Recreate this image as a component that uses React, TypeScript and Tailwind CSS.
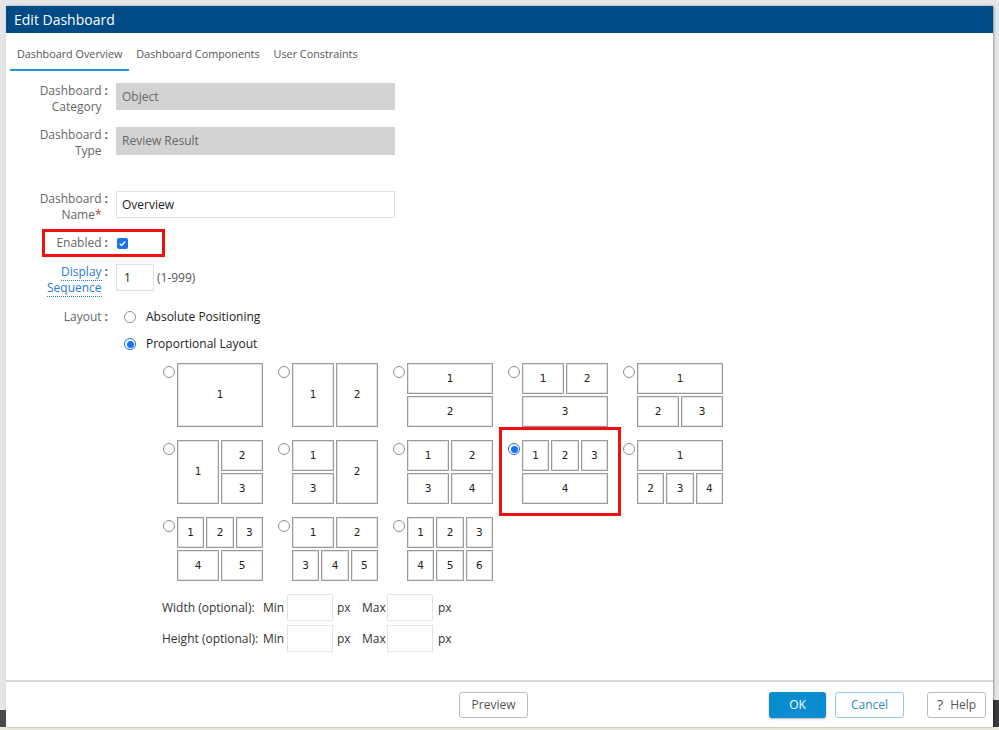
import React from 'react';

const Cell: React.FC<{ children: React.ReactNode }> = ({ children }) => (
  <div className="flex flex-1 items-center justify-center border border-[#9a9a9a] bg-white shadow-[inset_0_0_0_1px_#e4e4e4] font-['DejaVu_Sans',sans-serif] text-[10.5px] text-[#222]">
    {children}
  </div>
);

const Row: React.FC<{ children: React.ReactNode }> = ({ children }) => (
  <div className="flex flex-1 gap-[2px]">{children}</div>
);

const Col: React.FC<{ children: React.ReactNode }> = ({ children }) => (
  <div className="flex flex-1 flex-col gap-[2px]">{children}</div>
);

const Box: React.FC<{ children: React.ReactNode; row?: boolean }> = ({ children, row }) => (
  <div className={row ? 'flex h-[64px] w-[86px] gap-[2px]' : 'flex h-[64px] w-[86px] flex-col gap-[2px]'}>
    {children}
  </div>
);

const Radio: React.FC<{ checked?: boolean }> = ({ checked }) =>
  checked ? (
    <span className="flex h-[12px] w-[12px] items-center justify-center rounded-full border border-[#1a73e8] bg-white">
      <span className="h-[7px] w-[7px] rounded-full bg-[#1a73e8]" />
    </span>
  ) : (
    <span className="block h-[12px] w-[12px] rounded-full border border-[#8f8f8f] bg-white" />
  );

const layouts: { id: string; box: React.ReactNode }[] = [
  { id: 'a', box: <Box><Cell>1</Cell></Box> },
  { id: 'b', box: <Box row><Cell>1</Cell><Cell>2</Cell></Box> },
  { id: 'c', box: <Box><Cell>1</Cell><Cell>2</Cell></Box> },
  { id: 'd', box: <Box><Row><Cell>1</Cell><Cell>2</Cell></Row><Row><Cell>3</Cell></Row></Box> },
  { id: 'e', box: <Box><Row><Cell>1</Cell></Row><Row><Cell>2</Cell><Cell>3</Cell></Row></Box> },
  { id: 'f', box: <Box row><Col><Cell>1</Cell></Col><Col><Cell>2</Cell><Cell>3</Cell></Col></Box> },
  { id: 'g', box: <Box row><Col><Cell>1</Cell><Cell>3</Cell></Col><Col><Cell>2</Cell></Col></Box> },
  { id: 'h', box: <Box><Row><Cell>1</Cell><Cell>2</Cell></Row><Row><Cell>3</Cell><Cell>4</Cell></Row></Box> },
  { id: 'i', box: <Box><Row><Cell>1</Cell><Cell>2</Cell><Cell>3</Cell></Row><Row><Cell>4</Cell></Row></Box> },
  { id: 'j', box: <Box><Row><Cell>1</Cell></Row><Row><Cell>2</Cell><Cell>3</Cell><Cell>4</Cell></Row></Box> },
  { id: 'k', box: <Box><Row><Cell>1</Cell><Cell>2</Cell><Cell>3</Cell></Row><Row><Cell>4</Cell><Cell>5</Cell></Row></Box> },
  { id: 'l', box: <Box><Row><Cell>1</Cell><Cell>2</Cell></Row><Row><Cell>3</Cell><Cell>4</Cell><Cell>5</Cell></Row></Box> },
  { id: 'm', box: <Box><Row><Cell>1</Cell><Cell>2</Cell><Cell>3</Cell></Row><Row><Cell>4</Cell><Cell>5</Cell><Cell>6</Cell></Row></Box> },
];

const Label: React.FC<{ lines: React.ReactNode[]; link?: boolean }> = ({ lines, link }) => (
  <div className="flex w-[102px] shrink-0 justify-end">
    <div className={link ? 'text-right leading-[16px] text-[#2f7bd0]' : 'text-right leading-[16px] text-[#666]'}>
      {lines.map((l, i) => (
        <div key={i}>
          {link ? <span className="border-b border-dotted border-[#2f7bd0]">{l}</span> : l}
        </div>
      ))}
    </div>
    <span className="ml-[3px] font-bold leading-[16px] text-[#666]">:</span>
  </div>
);

const SizeRow: React.FC<{ label: string; className: string }> = ({ label, className }) => (
  <div className={`ml-[156px] flex items-center text-[#333] ${className}`}>
    <span className="w-[101px]">{label}</span>
    <span className="w-[24px]">Min</span>
    <div className="h-[27px] w-[46px] border border-[#e4e4e4]" />
    <span className="ml-[4px] w-[25px]">px</span>
    <span className="w-[25px]">Max</span>
    <div className="h-[27px] w-[46px] border border-[#e4e4e4]" />
    <span className="ml-[5px]">px</span>
  </div>
);

export default function App() {
  return (
    <div className="relative h-[730px] w-[999px] overflow-hidden bg-[#e3e5e7] pl-[6px] pt-[6px] font-['Open_Sans',sans-serif] text-[12px]">
      <div className="absolute bottom-0 left-0 h-[20px] w-[6px] bg-[#4a4a4a]" />
      <div className="absolute bottom-0 right-0 h-[30px] w-[6px] bg-[#3a3a3a]" />
      <div className="absolute bottom-0 left-0 h-[3px] w-full bg-[#ece9dc]" />

      <div className="relative flex h-[721px] w-[987px] flex-col bg-white shadow-[1px_0_2px_rgba(0,0,0,0.35)]">
        {/* title */}
        <div className="flex h-[27px] items-center bg-[#004b85] pl-[8px] text-[14px] text-white">Edit Dashboard</div>

        {/* tabs */}
        <div className="flex pl-[4px] text-[10.8px] text-[#555]">
          <div className="h-[38px] border-b-2 border-[#1a9ad6] px-[7px] pt-[13px] leading-[16px]">Dashboard Overview</div>
          <div className="h-[38px] px-[7px] pt-[13px] leading-[16px]">Dashboard Components</div>
          <div className="h-[38px] px-[7px] pt-[13px] leading-[16px]">User Constraints</div>
        </div>

        {/* form */}
        <div className="relative flex-1">
          <div className="mt-[12px] flex h-[27px] items-start">
            <Label lines={['Dashboard', 'Category']} />
            <div className="ml-[8px] flex h-[27px] w-[279px] items-center bg-[#d3d3d3] pl-[6px] text-[#666]">Object</div>
          </div>
          <div className="mt-[17px] flex h-[28px] items-start">
            <Label lines={['Dashboard', 'Type']} />
            <div className="ml-[8px] flex h-[28px] w-[279px] items-center bg-[#d3d3d3] pl-[6px] text-[#666]">Review Result</div>
          </div>
          <div className="mt-[36px] flex h-[27px] items-start">
            <Label lines={['Dashboard', <span key="n">Name<span className="text-[#c0392b]">*</span></span>]} />
            <div className="ml-[8px] flex h-[27px] w-[279px] items-center border border-[#e0e0e0] pl-[5px] text-[#222]">Overview</div>
          </div>

          <div className="relative mt-[17px] flex h-[16px] items-center">
            <Label lines={['Enabled']} />
            <span className="ml-[9px] flex h-[11px] w-[11px] items-center justify-center rounded-[2px] bg-[#1a73e8]">
              <svg viewBox="0 0 10 10" className="h-[9px] w-[9px]">
                <path d="M2 5.2 L4.1 7.2 L8 2.8" fill="none" stroke="white" strokeWidth="1.6" />
              </svg>
            </span>
            <div className="absolute left-[36px] top-[-6px] h-[28px] w-[123px] border-[3px] border-[#f01010]" />
          </div>

          <div className="mt-[13px] flex h-[27px] items-start">
            <Label link lines={['Display', 'Sequence']} />
            <div className="ml-[8px] flex h-[27px] w-[38px] items-center border border-[#e0e0e0] pl-[7px] text-[#222]">1</div>
            <span className="ml-[3px] mt-[5px] text-[#555]">(1-999)</span>
          </div>

          <div className="mt-[16px] flex h-[20px] items-center">
            <Label lines={['Layout']} />
            <span className="ml-[16px]"><Radio /></span>
            <span className="ml-[10px] text-[#222]">Absolute Positioning</span>
          </div>
          <div className="mt-[7px] flex h-[20px] items-center pl-[118px]">
            <Radio checked />
            <span className="ml-[10px] text-[#222]">Proportional Layout</span>
          </div>

          {/* layout options */}
          <div className="ml-[157px] mt-[9px] grid grid-cols-[repeat(5,115px)] gap-y-[13px]">
            {layouts.map((l) => (
              <div key={l.id} className="relative flex">
                <span className="mt-[3px]"><Radio checked={l.id === 'i'} /></span>
                <div className="ml-[2px]">{l.box}</div>
                {l.id === 'i' && (
                  <div className="absolute left-[-9px] top-[-13px] h-[89px] w-[122px] border-[3px] border-[#f01010]" />
                )}
              </div>
            ))}
          </div>

          <SizeRow label="Width (optional):" className="mt-[13px]" />
          <SizeRow label="Height (optional):" className="mt-[4px]" />
        </div>

        {/* footer */}
        <div className="flex h-[47px] shrink-0 items-center border-t-2 border-[#d6d6d6] pl-[453px] pr-[7px] text-[12px]">
          <button className="h-[26px] w-[69px] rounded-[3px] border border-[#bcbcbc] bg-white text-[#555]">Preview</button>
          <button className="ml-auto h-[26px] w-[57px] rounded-[3px] bg-[#0a8dd0] text-white shadow-[0_1px_2px_rgba(0,0,0,0.3)]">OK</button>
          <button className="ml-[9px] h-[26px] w-[69px] rounded-[3px] border border-[#8ccdf0] bg-white text-[#2a8ad0]">Cancel</button>
          <button className="ml-[23px] flex h-[26px] w-[59px] items-center justify-center gap-[7px] rounded-[3px] border border-[#bcbcbc] bg-white text-[#555]">
            <span className="text-[15px] leading-none">?</span>
            <span>Help</span>
          </button>
        </div>
      </div>
    </div>
  );
}
